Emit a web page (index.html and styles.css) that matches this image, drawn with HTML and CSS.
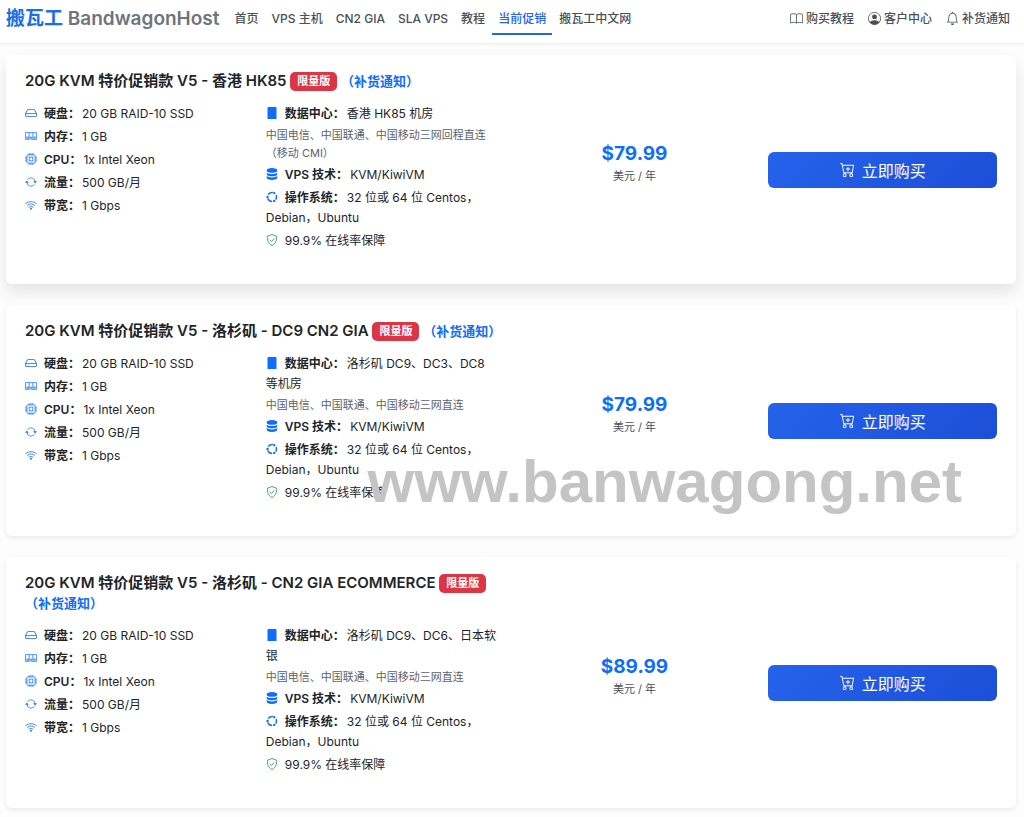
FILE: index.html
```html
<!DOCTYPE html>
<html lang="zh-CN">
<head>
    <meta charset="UTF-8">
    <meta name="viewport" content="width=device-width, initial-scale=1.0">
    <title>搬瓦工 BandwagonHost - 当前促销</title>
    <link rel="stylesheet" href="styles.css">
</head>
<body>
    <!-- icon sprite -->
    <svg class="sprite" xmlns="http://www.w3.org/2000/svg">
        <symbol id="hdd" viewBox="0 0 16 16">
            <path d="M4.5 11a.5.5 0 1 0 0-1 .5.5 0 0 0 0 1M3 10.5a.5.5 0 1 1-1 0 .5.5 0 0 1 1 0"/>
            <path d="M16 11a2 2 0 0 1-2 2H2a2 2 0 0 1-2-2V9.51c0-.418.105-.83.305-1.197l2.472-4.531A1.5 1.5 0 0 1 4.094 3h7.812a1.5 1.5 0 0 1 1.317.782l2.472 4.53c.2.368.305.78.305 1.198zM3.655 4.26 1.592 8.043Q1.79 8 2 8h12q.21 0 .408.042L12.345 4.26a.5.5 0 0 0-.439-.26H4.094a.5.5 0 0 0-.44.26zM1 10v1a1 1 0 0 0 1 1h12a1 1 0 0 0 1-1v-1a1 1 0 0 0-1-1H2a1 1 0 0 0-1 1"/>
        </symbol>
        <symbol id="memory" viewBox="0 0 16 16">
            <g fill="none" stroke="currentColor"><path d="M.5 3.5h15v9H8.6L7 11l-1.600 1.500H.5zM5.500 4v5M10.500 4v5M1 9.500h14M3 10v2M5 10v2M9 10v2M11 10v2M13 10v2"/></g>
        </symbol>
        <symbol id="cpu" viewBox="0 0 16 16">
            <g fill="none" stroke="currentColor"><rect x="2.500" y="2.500" width="11" height="11" rx="1.500"/><rect x="5.500" y="5.500" width="5" height="5"/><path d="M5.500 0v2.500M8 0v2.500M10.500 0v2.500M5.500 13.500V16M8 13.500V16M10.500 13.500V16M0 5.500h2.500M0 8h2.500M0 10.500h2.500M13.500 5.500H16M13.500 8H16M13.500 10.500H16"/></g>
        </symbol>
        <symbol id="repeat" viewBox="0 0 16 16">
            <path d="M11.534 7h3.932a.25.25 0 0 1 .192.410l-1.966 2.360a.25.25 0 0 1-.384 0l-1.966-2.360a.25.25 0 0 1 .192-.410m-11 2h3.932a.25.25 0 0 0 .192-.410L2.692 6.230a.25.25 0 0 0-.384 0L.342 8.590A.25.25 0 0 0 .534 9"/>
            <path d="M8 3c-1.552 0-2.940.707-3.857 1.818a.5.5 0 1 1-.771-.636A6.002 6.002 0 0 1 13.917 7H12.900A5 5 0 0 0 8 3M3.100 9a5.002 5.002 0 0 0 8.757 2.182.5.5 0 1 1 .771.636A6.002 6.002 0 0 1 2.083 9z"/>
        </symbol>
        <symbol id="wifi" viewBox="0 0 16 16">
            <g fill="none" stroke="currentColor" stroke-linecap="round"><path d="M.8 6a11 11 0 0 1 14.400 0M3 8.500a7.800 7.800 0 0 1 10 0M5.200 10.800a4.500 4.500 0 0 1 5.600 0"/></g>
            <circle cx="8" cy="13" r="1.200"/>
        </symbol>
        <symbol id="building" viewBox="0 0 16 16">
            <path d="M2 1a1 1 0 0 1 1-1h10a1 1 0 0 1 1 1v15H2z"/>
        </symbol>
        <symbol id="database" viewBox="0 0 16 16">
            <path d="M1 3c0-1.700 3-3 7-3s7 1.300 7 3v1c0 1.200-3 2.400-7 2.400S1 5.200 1 4zM1 6.200C2.500 7.400 5 8 8 8s5.500-.600 7-1.800V8.500c0 1.300-3 2.500-7 2.500s-7-1.200-7-2.500zM1 10.800c1.500 1.200 4 1.800 7 1.800s5.500-.600 7-1.800V13c0 1.700-3 3-7 3s-7-1.300-7-3z"/>
        </symbol>
        <symbol id="ubuntu" viewBox="0 0 16 16">
            <circle cx="8" cy="8" r="6" fill="none" stroke="currentColor" stroke-width="2" stroke-dasharray="7.200 5.366" stroke-dashoffset="3.600"/>
            <circle cx="2" cy="8" r="1.600"/><circle cx="11" cy="2.800" r="1.600"/><circle cx="11" cy="13.200" r="1.600"/>
        </symbol>
        <symbol id="shield" viewBox="0 0 16 16">
            <path d="M8 .6c1 .7 3.500 1.600 6 2.200.5 5-.8 9.700-6 12.600C2.800 12.500 1.500 7.800 2 2.800 4.500 2.200 7 1.300 8 .6zM5.300 8l2 2 3.500-3.700" fill="none" stroke="currentColor" stroke-linejoin="round" stroke-linecap="round"/>
        </symbol>
        <symbol id="book" viewBox="0 0 16 16">
            <path d="M8 3.200C6.500 1.900 3 1.800.5 3v10.500C3 12.500 6.500 12.400 8 13.700c1.500-1.300 5-1.200 7.500-.2V3C13 1.800 9.500 1.900 8 3.200v10.500" fill="none" stroke="currentColor"/>
        </symbol>
        <symbol id="person" viewBox="0 0 16 16">
            <path d="M11 6a3 3 0 1 1-6 0 3 3 0 0 1 6 0"/>
            <path fill-rule="evenodd" d="M0 8a8 8 0 1 1 16 0A8 8 0 0 1 0 8m8-7a7 7 0 0 0-5.468 11.370C3.242 11.226 4.805 10 8 10s4.757 1.225 5.468 2.370A7 7 0 0 0 8 1"/>
        </symbol>
        <symbol id="bell" viewBox="0 0 16 16">
            <path d="M8 16a2 2 0 0 0 2-2H6a2 2 0 0 0 2 2M8 1.918l-.797.161A4 4 0 0 0 4 6c0 .628-.134 2.197-.459 3.742-.160.767-.376 1.566-.663 2.258h10.244c-.287-.692-.502-1.490-.663-2.258C12.134 8.197 12 6.628 12 6a4 4 0 0 0-3.203-3.920zM14.220 12c.223.447.481.801.780 1H1c.299-.199.557-.553.780-1C2.680 10.200 3 6.880 3 6c0-2.420 1.720-4.440 4.005-4.901a1 1 0 1 1 1.990 0A5 5 0 0 1 13 6c0 .880.320 4.200 1.220 6"/>
        </symbol>
        <symbol id="cart" viewBox="0 0 16 16">
            <path d="M9 5.500a.5.5 0 0 0-1 0V7H6.500a.5.5 0 0 0 0 1H8v1.500a.5.5 0 0 0 1 0V8h1.500a.5.5 0 0 0 0-1H9z"/>
            <path d="M.5 1a.5.5 0 0 0 0 1h1.110l.401 1.607 1.498 7.985A.5.5 0 0 0 4 12h1a2 2 0 1 0 0 4 2 2 0 0 0 0-4h7a2 2 0 1 0 0 4 2 2 0 0 0 0-4h1a.5.5 0 0 0 .491-.408l1.500-8A.5.5 0 0 0 14.500 3H2.890l-.405-1.621A.5.5 0 0 0 2 1zm3.915 10L3.102 4h10.796l-1.313 7zM6 14a1 1 0 1 1-2 0 1 1 0 0 1 2 0m7 0a1 1 0 1 1-2 0 1 1 0 0 1 2 0"/>
        </symbol>
    </svg>

    <header class="navbar">
        <a class="brand" href="#">搬瓦工 <span>BandwagonHost</span></a>
        <nav class="nav">
            <a href="#">首页</a>
            <a href="#">VPS 主机</a>
            <a href="#">CN2 GIA</a>
            <a href="#">SLA VPS</a>
            <a href="#">教程</a>
            <a href="#" class="active">当前促销</a>
            <a href="#">搬瓦工中文网</a>
        </nav>
        <nav class="nav-right">
            <a href="#"><svg><use href="#book"/></svg>购买教程</a>
            <a href="#"><svg><use href="#person"/></svg>客户中心</a>
            <a href="#"><svg><use href="#bell"/></svg>补货通知</a>
        </nav>
    </header>

    <main>
        <section class="card raised">
            <div class="info">
                <h2>20G KVM 特价促销款 V5 - 香港 HK85 <span class="badge">限量版</span> <a href="#">（补货通知）</a></h2>
                <div class="specs">
                    <ul>
                        <li><svg><use href="#hdd"/></svg><b>硬盘：</b>20 GB RAID-10 SSD</li>
                        <li><svg><use href="#memory"/></svg><b>内存：</b>1 GB</li>
                        <li><svg><use href="#cpu"/></svg><b>CPU：</b>1x Intel Xeon</li>
                        <li><svg><use href="#repeat"/></svg><b>流量：</b>500 GB/月</li>
                        <li><svg><use href="#wifi"/></svg><b>带宽：</b>1 Gbps</li>
                    </ul>
                    <ul>
                        <li><svg><use href="#building"/></svg><b>数据中心：</b>香港 HK85 机房
                            <small>中国电信、中国联通、中国移动三网回程直连（移动 CMI）</small></li>
                        <li><svg><use href="#database"/></svg><b>VPS 技术：</b>KVM/KiwiVM</li>
                        <li><svg><use href="#ubuntu"/></svg><b>操作系统：</b>32 位或 64 位 Centos，Debian，Ubuntu</li>
                        <li><svg class="green"><use href="#shield"/></svg>99.9% 在线率保障</li>
                    </ul>
                </div>
            </div>
            <div class="price">
                <strong>$79.99</strong>
                <span>美元 / 年</span>
            </div>
            <button type="button" class="buy"><svg><use href="#cart"/></svg>立即购买</button>
        </section>

        <section class="card">
            <div class="info">
                <h2>20G KVM 特价促销款 V5 - 洛杉矶 - DC9 CN2 GIA <span class="badge">限量版</span> <a href="#">（补货通知）</a></h2>
                <div class="specs">
                    <ul>
                        <li><svg><use href="#hdd"/></svg><b>硬盘：</b>20 GB RAID-10 SSD</li>
                        <li><svg><use href="#memory"/></svg><b>内存：</b>1 GB</li>
                        <li><svg><use href="#cpu"/></svg><b>CPU：</b>1x Intel Xeon</li>
                        <li><svg><use href="#repeat"/></svg><b>流量：</b>500 GB/月</li>
                        <li><svg><use href="#wifi"/></svg><b>带宽：</b>1 Gbps</li>
                    </ul>
                    <ul>
                        <li><svg><use href="#building"/></svg><b>数据中心：</b>洛杉矶 DC9、DC3、DC8 等机房
                            <small>中国电信、中国联通、中国移动三网直连</small></li>
                        <li><svg><use href="#database"/></svg><b>VPS 技术：</b>KVM/KiwiVM</li>
                        <li><svg><use href="#ubuntu"/></svg><b>操作系统：</b>32 位或 64 位 Centos，Debian，Ubuntu</li>
                        <li><svg class="green"><use href="#shield"/></svg>99.9% 在线率保障</li>
                    </ul>
                </div>
            </div>
            <div class="price">
                <strong>$79.99</strong>
                <span>美元 / 年</span>
            </div>
            <button type="button" class="buy"><svg><use href="#cart"/></svg>立即购买</button>
            <div class="watermark">www.banwagong.net</div>
        </section>

        <section class="card">
            <div class="info">
                <h2>20G KVM 特价促销款 V5 - 洛杉矶 - CN2 GIA ECOMMERCE <span class="badge">限量版</span> <a href="#">（补货通知）</a></h2>
                <div class="specs">
                    <ul>
                        <li><svg><use href="#hdd"/></svg><b>硬盘：</b>20 GB RAID-10 SSD</li>
                        <li><svg><use href="#memory"/></svg><b>内存：</b>1 GB</li>
                        <li><svg><use href="#cpu"/></svg><b>CPU：</b>1x Intel Xeon</li>
                        <li><svg><use href="#repeat"/></svg><b>流量：</b>500 GB/月</li>
                        <li><svg><use href="#wifi"/></svg><b>带宽：</b>1 Gbps</li>
                    </ul>
                    <ul>
                        <li><svg><use href="#building"/></svg><b>数据中心：</b>洛杉矶 DC9、DC6、日本软银
                            <small>中国电信、中国联通、中国移动三网直连</small></li>
                        <li><svg><use href="#database"/></svg><b>VPS 技术：</b>KVM/KiwiVM</li>
                        <li><svg><use href="#ubuntu"/></svg><b>操作系统：</b>32 位或 64 位 Centos，Debian，Ubuntu</li>
                        <li><svg class="green"><use href="#shield"/></svg>99.9% 在线率保障</li>
                    </ul>
                </div>
            </div>
            <div class="price">
                <strong>$89.99</strong>
                <span>美元 / 年</span>
            </div>
            <button type="button" class="buy"><svg><use href="#cart"/></svg>立即购买</button>
        </section>
    </main>
</body>
</html>
```

FILE: styles.css
```css
* {
    box-sizing: border-box;
}

body {
    margin: 0;
    font-family: Inter, "Noto Sans CJK SC", sans-serif;
    font-size: 12px;
    line-height: 20px;
    color: #212529;
    background-color: #fdfdfd;
}

a {
    color: inherit;
    text-decoration: none;
}

svg {
    width: 12px;
    height: 12px;
    fill: currentColor;
}

.sprite {
    display: none;
}

/* top bar */
.navbar {
    display: flex;
    align-items: center;
    height: 44px;
    padding: 0 14px 6px 6px;
    background-color: #fff;
    border-bottom: 1px solid #f0f0f0;
    box-shadow: 0 1px 3px rgba(0, 0, 0, 0.04);
}

.brand {
    margin-right: 9px;
    font-size: 19px;
    font-weight: 600;
    color: #1a6fe8;
    white-space: nowrap;
}

.brand span {
    color: #6c757d;
}

.nav,
.nav-right {
    display: flex;
    font-weight: 500;
    color: #495057;
    white-space: nowrap;
}

.nav {
    gap: 1px;
}

.nav a {
    padding: 6px 6px 4px;
    border-bottom: 2px solid transparent;
}

.nav a.active {
    color: #2563eb;
    border-color: #2563eb;
}

.nav-right {
    gap: 14px;
    margin-left: auto;
}

.nav-right a {
    display: flex;
    align-items: center;
    gap: 3px;
}

.nav-right svg {
    width: 13px;
    height: 13px;
}

/* plans */
main {
    display: flex;
    flex-direction: column;
    gap: 21px;
    padding: 11px 8px 8px 6px;
}

.card {
    position: relative;
    display: grid;
    grid-template-columns: 52fr 24fr 25fr;
    column-gap: 24px;
    align-items: center;
    padding: 16px 19px;
    background-color: #fff;
    border-radius: 6px;
    box-shadow: 0 2px 4px rgba(0, 0, 0, 0.08);
}

.card.raised {
    box-shadow: 0 8px 16px rgba(0, 0, 0, 0.1);
}

h2 {
    margin: 0 -12px 13px 0;
    font-size: 15px;
    font-weight: 600;
    line-height: 20px;
}

h2 a {
    font-size: 13px;
    color: #0d6efd;
}

.badge {
    display: inline-block;
    padding: 0 7px;
    font-size: 11px;
    font-weight: 700;
    line-height: 19px;
    vertical-align: 1px;
    color: #fff;
    background-color: #dc3545;
    border-radius: 5px;
}

.specs {
    display: grid;
    grid-template-columns: 12fr 13fr;
    column-gap: 24px;
}

ul {
    margin: 0 0 14px;
    padding: 0;
    list-style: none;
}

ul + ul {
    padding-right: 3px;
}

li {
    margin-bottom: 3px;
}

li svg {
    margin-right: 7px;
    vertical-align: -1px;
    color: #0d6efd;
}

li svg.green {
    color: #198754;
}

li b {
    margin-right: 2px;
    font-weight: 600;
}

small {
    display: block;
    margin-top: 2px;
    font-size: 11px;
    line-height: 18px;
    color: #5c636a;
}

.price {
    padding-bottom: 12px;
    text-align: center;
}

.price strong {
    display: block;
    font-size: 19px;
    line-height: 24px;
    color: #0d6efd;
}

.price span {
    font-size: 11px;
    color: #495057;
}

.buy {
    display: flex;
    align-items: center;
    justify-content: center;
    gap: 7px;
    height: 36px;
    font-family: inherit;
    font-size: 16px;
    color: #fff;
    background: linear-gradient(135deg, #2563eb, #1d4ed8);
    border: 0;
    border-radius: 6px;
    cursor: pointer;
}

.buy svg {
    width: 15px;
    height: 15px;
}

.watermark {
    position: absolute;
    right: 54px;
    bottom: 20px;
    font-family: "Liberation Sans", Arial, sans-serif;
    font-size: 60px;
    font-weight: 700;
    line-height: 68px;
    color: #c4c4c4;
    pointer-events: none;
}
```
